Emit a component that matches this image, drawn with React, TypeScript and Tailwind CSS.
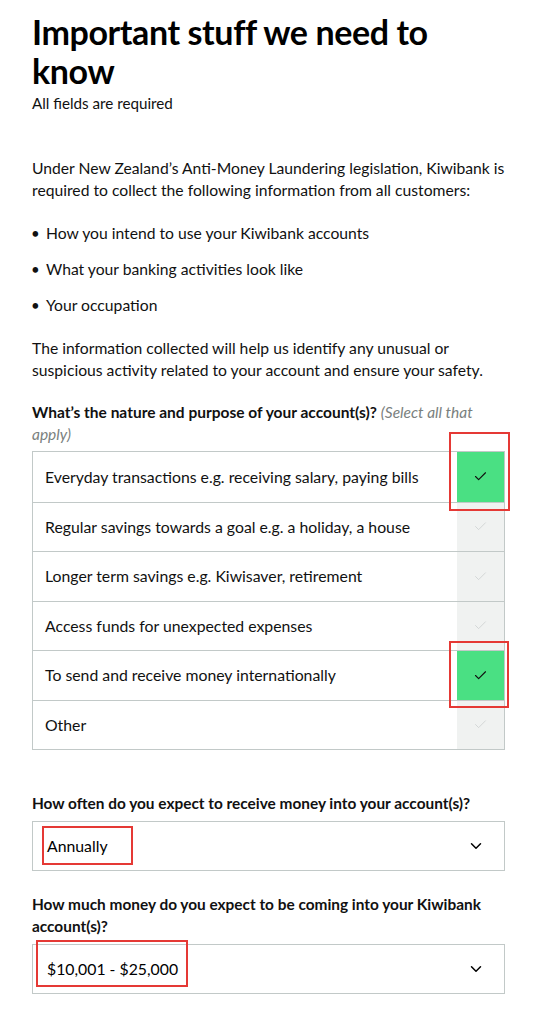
import { Check, ChevronDown } from "lucide-react";

const purposes = [
  { label: "Everyday transactions e.g. receiving salary, paying bills", checked: true },
  { label: "Regular savings towards a goal e.g. a holiday, a house", checked: false },
  { label: "Longer term savings e.g. Kiwisaver, retirement", checked: false },
  { label: "Access funds for unexpected expenses", checked: false },
  { label: "To send and receive money internationally", checked: true },
  { label: "Other", checked: false },
];

const bullets = [
  "How you intend to use your Kiwibank accounts",
  "What your banking activities look like",
  "Your occupation",
];

function Select({ value }: { value: string }) {
  return (
    <div className="flex h-[50px] items-center justify-between border border-[#c2c9c8] pl-[14px] pr-[19px]">
      <span className="text-[15.8px] text-black">{value}</span>
      <ChevronDown size={18} strokeWidth={2} className="text-black" />
    </div>
  );
}

export default function App() {
  return (
    <div
      className="relative w-[537px] bg-white px-8 pt-[12px] pb-6 text-[#111]"
      style={{ fontFamily: "Lato, 'Noto Sans', sans-serif" }}
    >
      <h1 className="text-[34px] font-bold leading-[39px] tracking-[-0.4px] text-black">
        Important stuff we need to know
      </h1>
      <p className="mt-[2px] text-[15.2px] leading-[22px]">All fields are required</p>

      <p className="mt-[43px] text-[15.7px] leading-[22px]">
        Under New Zealand’s Anti-Money Laundering legislation, Kiwibank is required to collect the
        following information from all customers:
      </p>

      <ul className="mt-[21px] flex flex-col gap-[14px]">
        {bullets.map((b) => (
          <li key={b} className="flex items-center text-[15.7px] leading-[22px]">
            <span className="-ml-[1px] w-[15px] text-[15px]">•</span>
            {b}
          </li>
        ))}
      </ul>

      <p className="mt-[21px] text-[15.7px] leading-[22px]">
        The information collected will help us identify any unusual or suspicious activity related
        to your account and ensure your safety.
      </p>

      <p className="mt-[20px] text-[15.5px] leading-[22px]">
        <span className="font-bold">What’s the nature and purpose of your account(s)?</span>{" "}
        <span className="italic text-[#7a7f7e]">(Select all that apply)</span>
      </p>

      <div className="mt-[6px] border border-[#c2c9c8]">
        {purposes.map((p, i) => (
          <div
            key={p.label}
            className={`flex h-[49.5px] items-stretch ${i > 0 ? "border-t border-[#c2c9c8]" : ""}`}
          >
            <div className="flex flex-1 items-center pl-[12px] text-[15.8px]">{p.label}</div>
            <div
              className={`flex w-[47px] items-center justify-center ${
                p.checked ? "bg-[#4ae083]" : "bg-[#f0f2f1]"
              }`}
            >
              <Check
                size={15}
                strokeWidth={p.checked ? 1.8 : 1.2}
                className={p.checked ? "text-[#111]" : "text-[#c9cecd]"}
              />
            </div>
          </div>
        ))}
      </div>

      <p className="mt-[42px] text-[15.4px] font-bold leading-[22px]">
        How often do you expect to receive money into your account(s)?
      </p>
      <div className="mt-[7px]">
        <Select value="Annually" />
      </div>

      <p className="mt-[22px] text-[15.4px] font-bold leading-[22px]">
        How much money do you expect to be coming into your Kiwibank account(s)?
      </p>
      <div className="mt-[7px]">
        <Select value="$10,001 - $25,000" />
      </div>

      {/* review annotations */}
      <div className="absolute left-[449px] top-[432px] h-[79px] w-[61px] border-2 border-[#e53935]" />
      <div className="absolute left-[449px] top-[641px] h-[67px] w-[60px] border-2 border-[#e53935]" />
      <div className="absolute left-[42px] top-[826px] h-[39px] w-[91px] border-2 border-[#e53935]" />
      <div className="absolute left-[36px] top-[940px] h-[47px] w-[152px] border-2 border-[#e53935]" />
    </div>
  );
}
